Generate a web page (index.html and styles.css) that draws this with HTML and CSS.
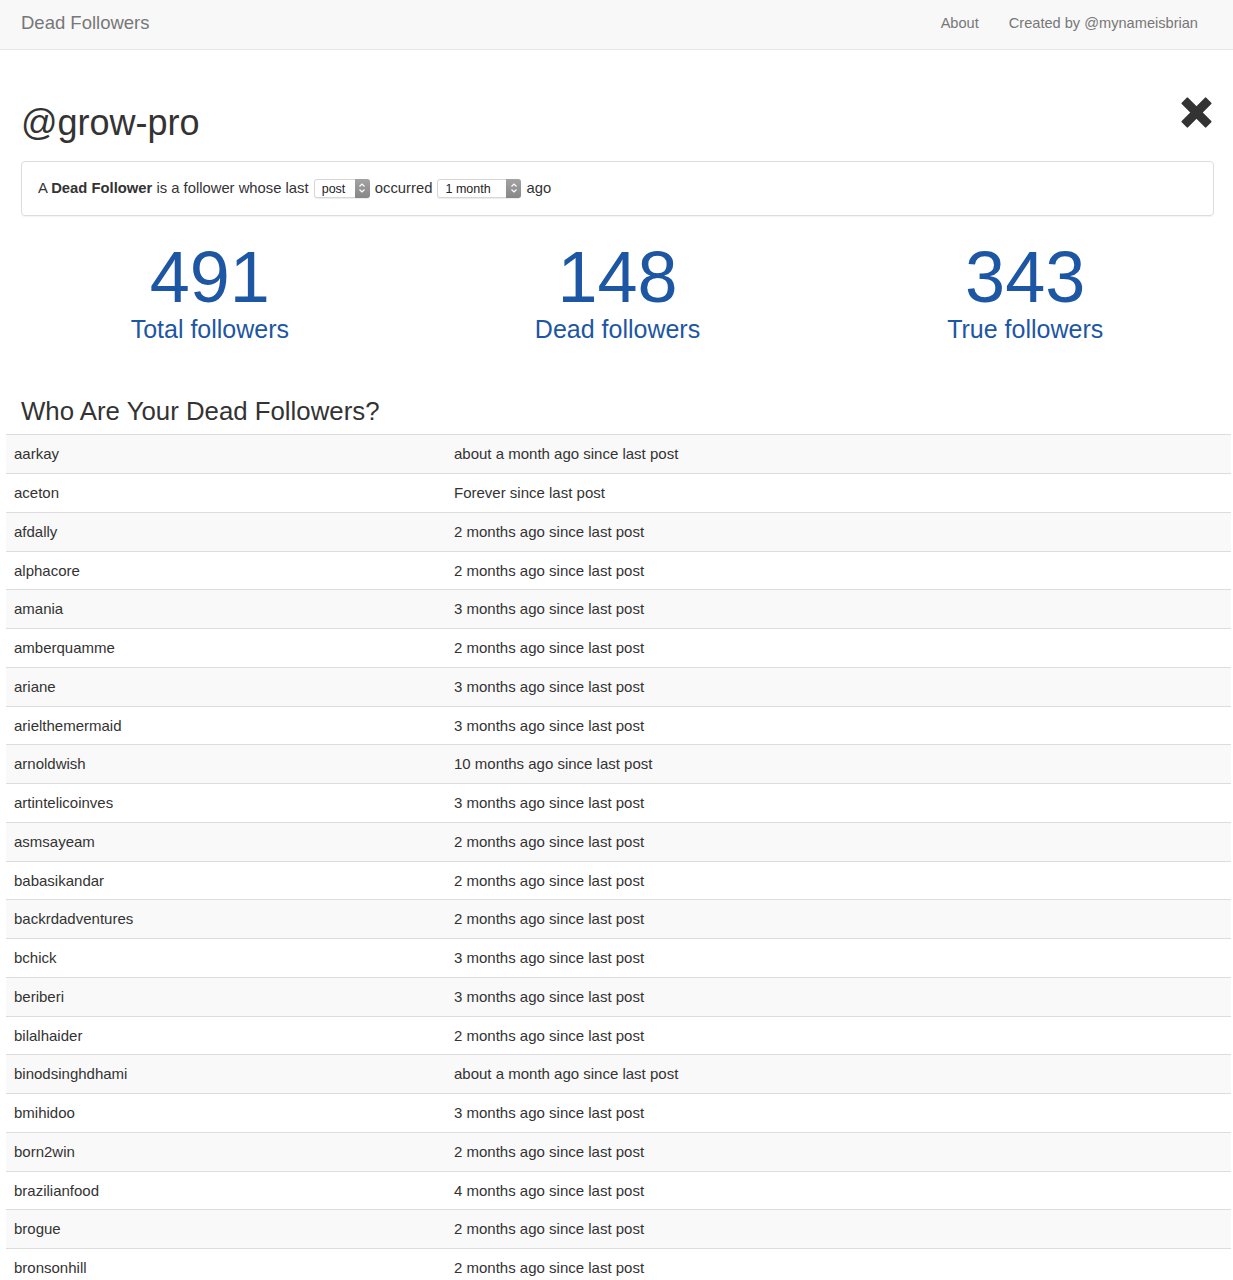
FILE: index.html
```html
<!DOCTYPE html>
<html lang="en">
<head>
    <meta charset="UTF-8">
    <meta name="viewport" content="width=device-width, initial-scale=1.0">
    <title>Dead Followers</title>
    <link rel="stylesheet" href="styles.css">
</head>
<body>
    <nav class="navbar">
        <a class="brand" href="#">Dead Followers</a>
        <ul class="nav">
            <li><a href="#">About</a></li>
            <li><a href="#">Created by @mynameisbrian</a></li>
        </ul>
    </nav>

    <div class="container">
        <div class="page-head">
            <h1>@grow-pro</h1>
            <a class="close" href="#" title="Remove">
                <svg width="31" height="31" viewBox="0 0 31 31">
                    <rect x="-1.9" y="11" width="34.8" height="9" rx="1" transform="rotate(45 15.5 15.5)" fill="#333"/>
                    <rect x="-1.9" y="11" width="34.8" height="9" rx="1" transform="rotate(-45 15.5 15.5)" fill="#333"/>
                </svg>
            </a>
        </div>

        <div class="panel">
            A <b>Dead Follower</b> is a follower whose last
            <span class="picker picker-post">
                <select>
                    <option>post</option>
                    <option>like</option>
                </select>
                <span class="stepper">
                    <svg width="8" height="12" viewBox="0 0 8 12">
                        <path d="M1.5 4.5 L4 2 L6.5 4.5 M1.5 7.5 L4 10 L6.5 7.5" fill="none" stroke="#fff" stroke-width="1.2"/>
                    </svg>
                </span>
            </span>
            occurred
            <span class="picker picker-time">
                <select>
                    <option>1 month</option>
                    <option>2 months</option>
                    <option>3 months</option>
                </select>
                <span class="stepper">
                    <svg width="8" height="12" viewBox="0 0 8 12">
                        <path d="M1.5 4.5 L4 2 L6.5 4.5 M1.5 7.5 L4 10 L6.5 7.5" fill="none" stroke="#fff" stroke-width="1.2"/>
                    </svg>
                </span>
            </span>
            ago
        </div>

        <div class="stats">
            <div class="stat">
                <div class="stat-num">491</div>
                <div class="stat-label">Total followers</div>
            </div>
            <div class="stat">
                <div class="stat-num">148</div>
                <div class="stat-label">Dead followers</div>
            </div>
            <div class="stat">
                <div class="stat-num">343</div>
                <div class="stat-label">True followers</div>
            </div>
        </div>

        <h3>Who Are Your Dead Followers?</h3>

        <table class="table">
            <tr><td>aarkay</td><td>about a month ago since last post</td></tr>
            <tr><td>aceton</td><td>Forever since last post</td></tr>
            <tr><td>afdally</td><td>2 months ago since last post</td></tr>
            <tr><td>alphacore</td><td>2 months ago since last post</td></tr>
            <tr><td>amania</td><td>3 months ago since last post</td></tr>
            <tr><td>amberquamme</td><td>2 months ago since last post</td></tr>
            <tr><td>ariane</td><td>3 months ago since last post</td></tr>
            <tr><td>arielthemermaid</td><td>3 months ago since last post</td></tr>
            <tr><td>arnoldwish</td><td>10 months ago since last post</td></tr>
            <tr><td>artintelicoinves</td><td>3 months ago since last post</td></tr>
            <tr><td>asmsayeam</td><td>2 months ago since last post</td></tr>
            <tr><td>babasikandar</td><td>2 months ago since last post</td></tr>
            <tr><td>backrdadventures</td><td>2 months ago since last post</td></tr>
            <tr><td>bchick</td><td>3 months ago since last post</td></tr>
            <tr><td>beriberi</td><td>3 months ago since last post</td></tr>
            <tr><td>bilalhaider</td><td>2 months ago since last post</td></tr>
            <tr><td>binodsinghdhami</td><td>about a month ago since last post</td></tr>
            <tr><td>bmihidoo</td><td>3 months ago since last post</td></tr>
            <tr><td>born2win</td><td>2 months ago since last post</td></tr>
            <tr><td>brazilianfood</td><td>4 months ago since last post</td></tr>
            <tr><td>brogue</td><td>2 months ago since last post</td></tr>
            <tr><td>bronsonhill</td><td>2 months ago since last post</td></tr>
        </table>
    </div>
</body>
</html>
```

FILE: styles.css
```css
body {
    font-family: "Liberation Sans", Arial, sans-serif;
    font-size: 15px;
    color: #333;
    background-color: #fff;
    margin: 0;
}
a {
    text-decoration: none;
}
.navbar {
    height: 49px;
    background-color: #f8f8f8;
    border-bottom: 1px solid #e7e7e7;
    display: flex;
    align-items: center;
    justify-content: space-between;
    padding: 0 20px 0 21px;
}
.brand {
    font-size: 18.5px;
    color: #777;
    line-height: 20px;
    margin-top: -4px;
}
.nav {
    list-style: none;
    margin: -4px 0 0 0;
    padding: 0;
    display: flex;
}
.nav a {
    display: block;
    color: #777;
    font-size: 14.6px;
    padding: 0 15px;
    line-height: 20px;
}
.container {
    padding: 0 19px 0 21px;
}
.page-head {
    display: flex;
    justify-content: space-between;
    align-items: flex-start;
    margin-top: 53px;
}
h1 {
    font-size: 36px;
    font-weight: normal;
    line-height: 1.1;
    margin: 0;
}
.close {
    margin-top: -6px;
    margin-right: 2px;
}
.panel {
    margin-top: 18px;
    border: 1px solid #ddd;
    border-radius: 4px;
    padding: 16px 16px;
    font-size: 14.8px;
    line-height: 21px;
    box-shadow: 0 1px 1px rgba(0, 0, 0, 0.05);
}
.picker {
    position: relative;
    display: inline-block;
    vertical-align: top;
    height: 19px;
    margin: 0 1px;
    top: 1px;
}
.picker select {
    -webkit-appearance: none;
    appearance: none;
    font-family: "Liberation Sans", Arial, sans-serif;
    font-size: 12.5px;
    color: #222;
    height: 19px;
    line-height: 17px;
    padding: 1px 0 0 7px;
    border: 1px solid #d6d6d6;
    border-radius: 3px;
    background: #fff;
    box-shadow: 0 1px 1px rgba(0, 0, 0, 0.08);
    display: block;
}
.picker-post select {
    width: 56px;
}
.picker-time select {
    width: 84px;
}
.stepper {
    position: absolute;
    top: 0;
    right: 0;
    width: 15px;
    height: 19px;
    border-radius: 0 3px 3px 0;
    background: linear-gradient(#a3a3a3, #868686);
    display: flex;
    align-items: center;
    justify-content: center;
    pointer-events: none;
}
.stats {
    display: flex;
    margin: 25px -15px 0 -15px;
}
.stat {
    flex: 1;
    text-align: center;
    color: #1d56a3;
}
.stat-num {
    font-size: 72px;
    line-height: 72px;
}
.stat-label {
    font-size: 25px;
    line-height: 1.1;
    margin-top: 3px;
}
h3 {
    font-size: 25.8px;
    font-weight: normal;
    line-height: 1.1;
    margin: 54px 0 9px 0;
}
.table {
    width: calc(100% + 32px);
    margin: 0 -15px;
    border-collapse: collapse;
}
.table td {
    padding: 8px;
    line-height: 21.75px;
    border-top: 1px solid #ddd;
    vertical-align: top;
}
.table td:first-child {
    width: 424px;
}
.table tr:nth-child(odd) td {
    background-color: #f9f9f9;
}
```
